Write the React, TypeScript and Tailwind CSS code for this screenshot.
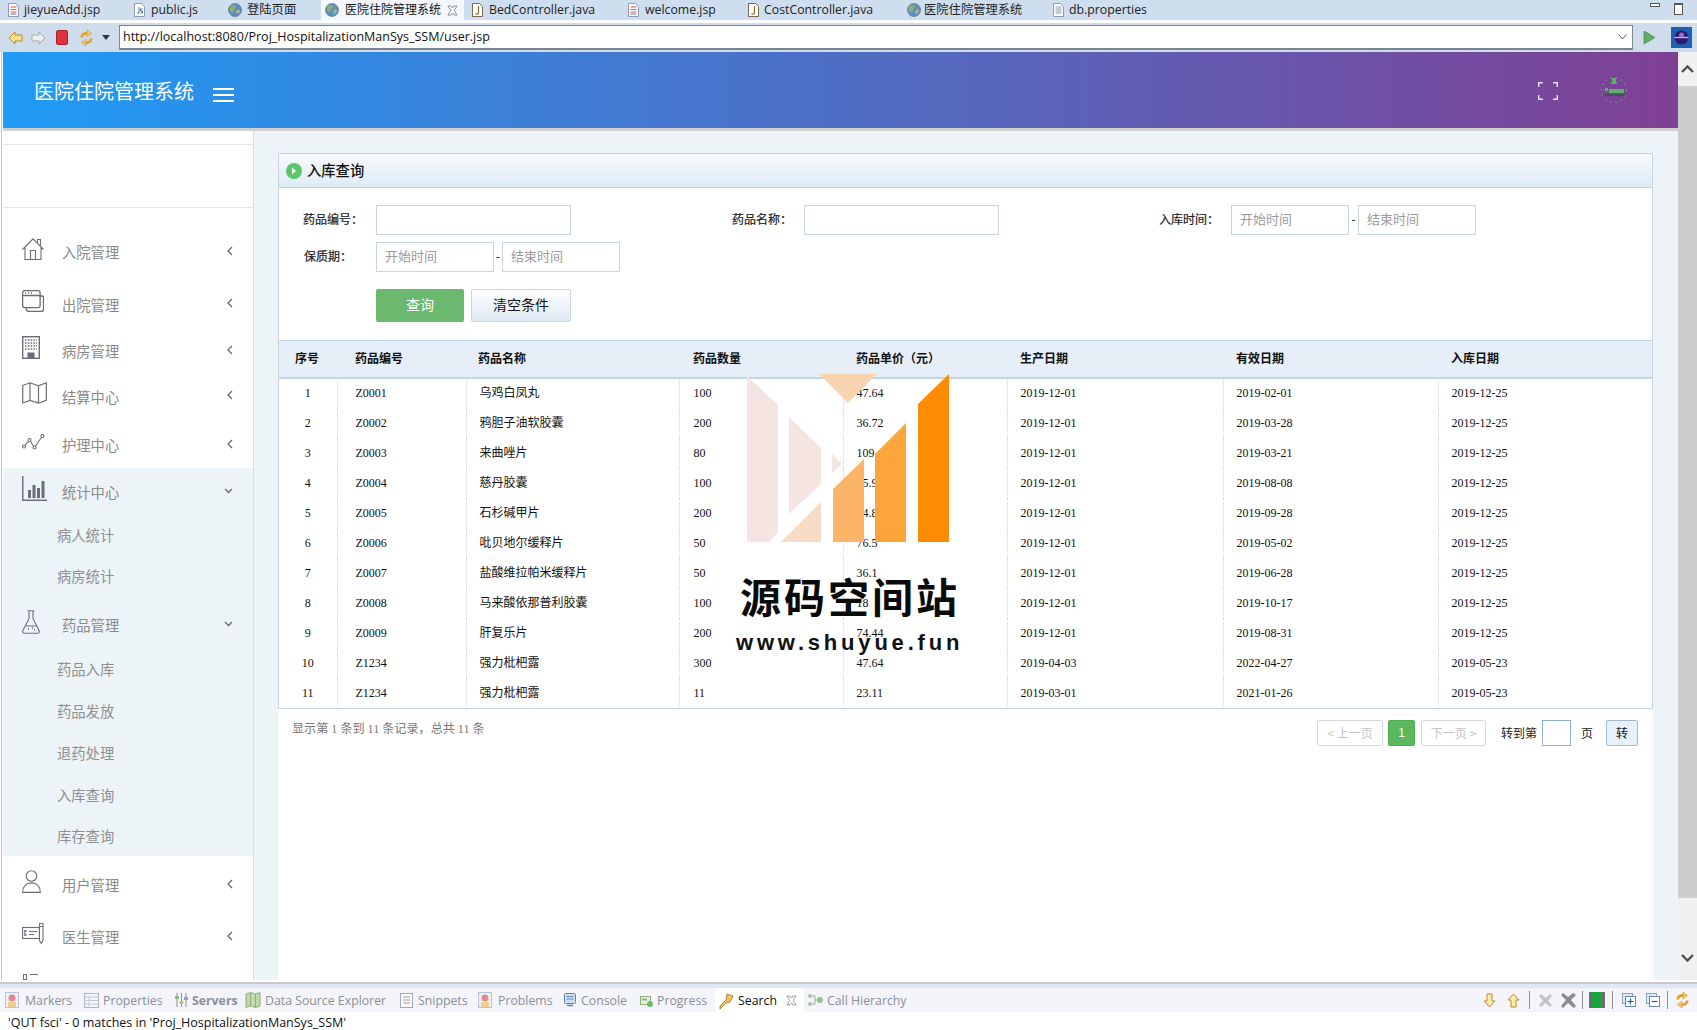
import React from "react";

const cjk = "font-['Noto_Sans_CJK_SC',sans-serif]";
const ui = "font-['Open_Sans','Noto_Sans_CJK_SC',sans-serif]";
const mixed = "font-['Liberation_Serif','Noto_Sans_CJK_SC',serif]";

function Globe() {
  return (
    <svg width="14" height="14" viewBox="0 0 14 14" className="shrink-0">
      <circle cx="7" cy="7" r="6.5" fill="#5d8fc0" />
      <path d="M3 3c2-2 4-1 5 0 0 2-2 2-2 4s-2 3-3 2-2-4 0-6z" fill="#8fae6e" />
      <path d="M9 7c2-1 3 0 3 1s-2 3-3 3-1-3 0-4z" fill="#a9b98a" />
      <circle cx="7" cy="7" r="6.5" fill="none" stroke="#46688c" strokeWidth="0.6" />
    </svg>
  );
}
function FileIco({ kind }: { kind: "jsp" | "js" | "java" | "txt" }) {
  const c = kind === "java" ? "#8a6a2c" : "#8b97a8";
  return (
    <svg width="11" height="14" viewBox="0 0 11 14" className="shrink-0">
      <path d="M.5.5h7l3 3v10h-10z" fill="#fff" stroke={kind === "java" ? "#6f6a50" : "#8f9bb0"} />
      {kind === "jsp" && (
        <>
          <path d="M2.5 4h6" stroke="#d5533f" />
          <path d="M2.5 6.500h6" stroke="#5ba05b" />
          <path d="M2.500 9h6" stroke="#d5533f" />
          <path d="M2.500 11h6" stroke="#5b7fb8" />
        </>
      )}
      {kind === "js" && <path d="M5 4v6M3 10h2M6.500 6h2M6.500 6v2h2v2h-2" stroke="#4f6f9c" fill="none" />}
      {kind === "java" && <path d="M6.500 3v7c0 1-2 1.500-3 .5" stroke={c} fill="none" strokeWidth="1.200" />}
      {kind === "txt" && <path d="M2.500 4h6M2.500 6h6M2.500 8h6M2.500 10h6" stroke={c} />}
    </svg>
  );
}
function XIco({ c = "#777" }: { c?: string }) {
  return (
    <svg width="11" height="11" viewBox="0 0 11 11" className="shrink-0">
      <path d="M1 1l3 0 1.500 2 1.500-2 3 0-2.800 4.500 2.800 4.500-3 0-1.500-2-1.500 2-3 0 2.800-4.500z" fill="#fff" stroke={c} strokeWidth="0.8" />
    </svg>
  );
}

const tabs = [
  { w: "w-[126px]", label: "jieyueAdd.jsp", ico: <FileIco kind="jsp" />, gap: "gap-[5px]" },
  { w: "w-[94px]", label: "public.js", ico: <FileIco kind="js" />, gap: "gap-[6px]" },
  { w: "w-[101px]", label: "登陆页面", ico: <Globe />, gap: "gap-[5px]" },
];
const tabs2 = [
  { w: "w-[156px]", label: "BedController.java", ico: <FileIco kind="java" />, gap: "gap-[6px]" },
  { w: "w-[120px]", label: "welcome.jsp", ico: <FileIco kind="jsp" />, gap: "gap-[6px]" },
  { w: "w-[159px]", label: "CostController.java", ico: <FileIco kind="java" />, gap: "gap-[5px]" },
  { w: "w-[146px]", label: "医院住院管理系统", ico: <Globe />, gap: "gap-[3px]" },
  { w: "w-[110px]", label: "db.properties", ico: <FileIco kind="txt" />, gap: "gap-[5px]" },
];

function TabBar() {
  const cls = `flex items-center h-[20px] pl-[8px] text-[12.300px] text-[#222] ${ui}`;
  return (
    <div className="flex h-[20px] bg-[#cfdeee] shrink-0">
      {tabs.map((t) => (
        <div key={t.label} className={`${cls} ${t.w} ${t.gap}`}>
          {t.ico}
          <span className="whitespace-nowrap">{t.label}</span>
        </div>
      ))}
      <div className={`flex items-center h-[20px] w-[143px] pl-[4px] gap-[6px] bg-[#f4f7fb] text-[12px] text-[#111] ${ui}`}>
        <Globe />
        <span className="whitespace-nowrap">医院住院管理系统</span>
        <XIco />
      </div>
      {tabs2.map((t) => (
        <div key={t.label} className={`${cls} ${t.w} ${t.gap}`}>
          {t.ico}
          <span className="whitespace-nowrap">{t.label}</span>
        </div>
      ))}
      <div className="ml-auto flex pt-[3px] pr-[14px] gap-[14px]">
        <div className="w-[10px] h-[4px] border border-[#555] bg-white" />
        <div className="w-[9px] h-[12px] border border-[#555] border-t-2 bg-white" />
      </div>
    </div>
  );
}

function Arrow({ fill, stroke, dir }: { fill: string; stroke: string; dir: "l" | "r" }) {
  return (
    <svg width="15" height="14" viewBox="0 0 15 14" className="shrink-0">
      <path d={dir === "l" ? "M1 7l6-6v3h7v6h-7v3z" : "M14 7l-6-6v3h-7v6h7v3z"} fill={fill} stroke={stroke} />
    </svg>
  );
}
function Sync() {
  return (
    <svg width="15" height="18" viewBox="0 0 15 18" fill="none" className="shrink-0">
      <path d="M2.500 8.500C3 5.500 5.500 4 8.500 4.500" stroke="#e0a02c" strokeWidth="2.600" />
      <path d="M8 1l4.500 3.500L8 8z" fill="#f4c859" stroke="#c68a1a" strokeWidth="0.500" />
      <path d="M12.500 9.500C12 12.500 9.500 14 6.500 13.500" stroke="#e0a02c" strokeWidth="2.600" />
      <path d="M7 10l-4.500 3.500L7 17z" fill="#f4c859" stroke="#c68a1a" strokeWidth="0.500" />
    </svg>
  );
}

function Toolbar() {
  return (
    <div className="flex items-center h-[29px] bg-[#cfdcec] shrink-0 pl-[8px]">
      <Arrow fill="#fbe08e" stroke="#b98a1d" dir="l" />
      <span className="ml-[8px]"><Arrow fill="#eee" stroke="#aaa" dir="r" /></span>
      <div className="ml-[10px] w-[12px] h-[15px] rounded-[2px] bg-[#e0323c] border border-[#a9212a]" />
      <span className="ml-[11px]"><Sync /></span>
      <svg width="8" height="5" viewBox="0 0 8 5" className="ml-[8px] shrink-0"><path d="M0 0h8l-4 5z" fill="#333" /></svg>
      <div className={`ml-[9px] flex items-center w-[1514px] h-[25px] bg-white border border-[#7a8590] border-b-2 pl-[3px] pr-[5px] text-[12.500px] text-[#111] ${ui}`}>
        <span className="whitespace-nowrap">http://localhost:8080/Proj_HospitalizationManSys_SSM/user.jsp</span>
        <svg width="9" height="6" viewBox="0 0 9 6" className="ml-auto"><path d="M.5.5l4 4.500 4-4.500" fill="none" stroke="#555" /></svg>
      </div>
      <svg width="13" height="13" viewBox="0 0 13 13" className="ml-[10px] shrink-0"><path d="M1 0l11 6.500-11 6.500z" fill="#5fae5f" stroke="#2f7d3f" strokeWidth="0.600" /></svg>
      <svg width="21" height="21" viewBox="0 0 21 21" className="ml-[15px] shrink-0">
        <rect width="21" height="21" fill="#1f5fb0" />
        <circle cx="10.500" cy="10.500" r="7" fill="#2c1c6e" />
        <path d="M3.500 10.500h14" stroke="#d6a8e8" strokeWidth="1.400" />
        <circle cx="10.500" cy="8" r="2.500" fill="#9a6ac8" />
      </svg>
    </div>
  );
}

const iconStroke = "#6d6d7a";
const Svg = ({ w, h, children }: { w: number; h: number; children: React.ReactNode }) => (
  <svg width={w} height={h} viewBox={`0 0 ${w} ${h}`} fill="none" stroke={iconStroke} strokeWidth="1.100" className="block">
    {children}
  </svg>
);
const HomeI = () => (
  <Svg w={22} h={22}>
    <path d="M.5 11.500L11 .8l10.500 10.700M3 9.500v12h16v-12M8.500 21.500v-9h5v9M15.500 4.500V1.500h3v6" />
  </Svg>
);
const WinI = () => (
  <Svg w={22} h={22}>
    <rect x=".6" y=".6" width="17.500" height="17" rx="2" strokeWidth="1.300" />
    <path d="M.6 5.500h17.500M18 6h2a1.500 1.500 0 0 1 1.500 1.500v12a2 2 0 0 1-2 2H7a2.500 2.500 0 0 1-2.500-3.500" strokeWidth="1.300" />
    <path d="M3 3h1M6 3h1M9 3h1" strokeWidth="1.500" />
  </Svg>
);
const BuildI = () => (
  <Svg w={18} h={23}>
    <rect x=".7" y=".7" width="16.600" height="21.600" strokeWidth="1.400" />
    <path d="M3 4h12M3 7h12M3 10h12M3 13h12" strokeDasharray="1.600 1.200" strokeWidth="1.500" />
    <path d="M6 22v-5h6v5z" fill={iconStroke} />
  </Svg>
);
const MapI = () => (
  <Svg w={25} h={22}>
    <path d="M.7 3.500L8 .8l8.500 3L24.300.8v17.500L16.500 21 8 18.500.7 21zM8 .8v17.700M16.500 3.800V21" strokeWidth="1.200" />
  </Svg>
);
const LineI = () => (
  <Svg w={23} h={16}>
    <circle cx="2" cy="12.500" r="1.500" />
    <circle cx="7.500" cy="6" r="1.500" />
    <circle cx="12.500" cy="13.500" r="1.500" />
    <circle cx="20.500" cy="2" r="1.500" />
    <path d="M3 11.300l3.500-4M8.500 7.300l3 5M13.500 12.300l6-9" />
  </Svg>
);
const BarI = () => (
  <Svg w={25} h={25}>
    <path d="M.8 0v24.200H25" strokeWidth="1.400" />
    <path d="M6 14h3v8H6zM10.500 9h3v13h-3zM15 12h3v10h-3zM19.500 5h3v17h-3z" fill={iconStroke} stroke="none" />
  </Svg>
);
const FlaskI = () => (
  <Svg w={18} h={24}>
    <path d="M5.500.7h7M7 .7v8L.9 20.500c-.6 1.500.2 2.800 1.800 2.800h12.600c1.600 0 2.400-1.300 1.800-2.800L11 8.700v-8M4 16h10" />
    <path d="M6 19h1M10 18h1M12 20h1" strokeWidth="1.400" />
  </Svg>
);
const UserI = () => (
  <Svg w={19} h={23}>
    <circle cx="9.500" cy="6" r="5.300" />
    <path d="M.6 22.400c0-6 3.800-9.500 8.900-9.500s8.900 3.500 8.900 9.500z" />
  </Svg>
);
const ChequeI = () => (
  <Svg w={23} h={23}>
    <rect x=".6" y="5.500" width="16.800" height="11" />
    <path d="M3 8v6M5 9h-3M5 13H2M7 9.500h8M7 12.500h5" />
    <path d="M17.500 1.500h3.500v17l-1.700 3-1.800-3zM17.500 4.500H21" />
  </Svg>
);

const Chev = ({ open }: { open?: boolean }) =>
  open ? (
    <svg width="9" height="6" viewBox="0 0 9 6" className="ml-auto mr-[20px] -mt-[2px] shrink-0"><path d="M1 1l3.500 3.500L8 1" fill="none" stroke="#666" strokeWidth="1.300" /></svg>
  ) : (
    <svg width="6" height="10" viewBox="0 0 6 10" className="ml-auto mr-[20px] -mt-[2px] shrink-0"><path d="M5 1L1 5l4 4" fill="none" stroke="#666" strokeWidth="1.300" /></svg>
  );

function NavRow({ h, icon, label, open }: { h: string; icon: React.ReactNode; label: string; open?: boolean }) {
  return (
    <div className={`flex items-center pl-[19px] ${h}`}>
      <div className="w-[40px] -mt-[6px] shrink-0">{icon}</div>
      <span className={`text-[14.300px] text-[#8a8a8a] whitespace-nowrap ${cjk}`}>{label}</span>
      <Chev open={open} />
    </div>
  );
}
function SubRow({ h, label }: { h: string; label: string }) {
  return (
    <div className={`flex items-center pl-[54px] pt-[2px] ${h} text-[14.300px] text-[#8f8f8f] ${cjk}`}>{label}</div>
  );
}

function Sidebar() {
  return (
    <aside className="w-[251px] shrink-0 bg-white border-r border-[#d5dfe5] flex flex-col overflow-hidden">
      <div className="h-[14px] shrink-0 border-b border-[#e5e5e5]" />
      <div className="h-[63px] shrink-0 border-b border-[#e5e5e5]" />
      <div className="h-[18px] shrink-0" />
      <NavRow h="h-[52px]" icon={<HomeI />} label="入院管理" />
      <NavRow h="h-[54px]" icon={<WinI />} label="出院管理" />
      <NavRow h="h-[40px]" icon={<BuildI />} label="病房管理" />
      <NavRow h="h-[50px] pt-[2px]" icon={<MapI />} label="结算中心" />
      <NavRow h="h-[48px] pt-[2px]" icon={<LineI />} label="护理中心" />
      <div className="bg-[#ecf4f8] shrink-0">
        <NavRow h="h-[46px] pt-[2px]" icon={<BarI />} label="统计中心" open />
        <SubRow h="h-[40px]" label="病人统计" />
        <SubRow h="h-[42px]" label="病房统计" />
        <NavRow h="h-[51px] pt-[7px]" icon={<FlaskI />} label="药品管理" open />
        <SubRow h="h-[42px]" label="药品入库" />
        <SubRow h="h-[42px]" label="药品发放" />
        <SubRow h="h-[42px]" label="退药处理" />
        <SubRow h="h-[41px]" label="入库查询" />
        <SubRow h="h-[42px]" label="库存查询" />
      </div>
      <NavRow h="h-[56px] pt-[2px]" icon={<UserI />} label="用户管理" />
      <NavRow h="h-[48px] pt-[3px]" icon={<ChequeI />} label="医生管理" />
      <div className="pt-[15px] pl-[20px] flex gap-[3px]">
        <div className="w-[4px] h-[6px] border border-[#6d6d7a]" />
        <div className="w-[8px] h-[1px] bg-[#6d6d7a]" />
      </div>
    </aside>
  );
}

const inputCls = `h-[30px] border border-[#c5d5e2] bg-white pl-[8px] pr-[8px] pb-[3px] text-[13px] outline-none placeholder:text-[#9a9a9a] shrink-0 ${cjk}`;
const labelCls = `text-[12px] text-[#222] whitespace-nowrap shrink-0 pb-[2px] [-webkit-text-stroke:0.2px_#222] ${cjk}`;

function Form() {
  return (
    <div className="h-[152px] shrink-0 pt-[17px]">
      <div className="flex items-center pl-[24px]">
        <span className={`w-[73px] ${labelCls}`}>药品编号：</span>
        <input className={`w-[195px] ${inputCls}`} />
        <span className={`ml-[161px] w-[72px] ${labelCls}`}>药品名称：</span>
        <input className={`w-[195px] ${inputCls}`} />
        <span className={`ml-[160px] w-[72px] ${labelCls}`}>入库时间：</span>
        <input className={`w-[118px] ${inputCls}`} placeholder="开始时间" />
        <span className="w-[9px] text-center text-[12px] text-[#333]">-</span>
        <input className={`w-[118px] ${inputCls}`} placeholder="结束时间" />
      </div>
      <div className="flex items-center pl-[25px] mt-[7px]">
        <span className={`w-[72px] ${labelCls}`}>保质期：</span>
        <input className={`w-[118px] ${inputCls}`} placeholder="开始时间" />
        <span className="w-[8px] text-center text-[12px] text-[#333]">-</span>
        <input className={`w-[118px] ${inputCls}`} placeholder="结束时间" />
      </div>
      <div className="flex pl-[97px] mt-[17px] gap-[7px]">
        <button className={`w-[88px] h-[33px] pb-[3px] rounded-[2px] bg-[#6ab96f] text-white text-[14px] ${cjk}`}>查询</button>
        <button className={`w-[100px] h-[33px] pb-[3px] rounded-[2px] border border-[#c5d5e2] bg-linear-to-b/srgb from-white to-[#dfe9f3] text-[#111] text-[14px] ${cjk}`}>清空条件</button>
      </div>
    </div>
  );
}

const rows = [
  ["1", "Z0001", "乌鸡白凤丸", "100", "47.64", "2019-12-01", "2019-02-01", "2019-12-25"],
  ["2", "Z0002", "鸦胆子油软胶囊", "200", "36.72", "2019-12-01", "2019-03-28", "2019-12-25"],
  ["3", "Z0003", "来曲唑片", "80", "109", "2019-12-01", "2019-03-21", "2019-12-25"],
  ["4", "Z0004", "慈丹胶囊", "100", "75.9", "2019-12-01", "2019-08-08", "2019-12-25"],
  ["5", "Z0005", "石杉碱甲片", "200", "64.8", "2019-12-01", "2019-09-28", "2019-12-25"],
  ["6", "Z0006", "吡贝地尔缓释片", "50", "76.5", "2019-12-01", "2019-05-02", "2019-12-25"],
  ["7", "Z0007", "盐酸维拉帕米缓释片", "50", "36.1", "2019-12-01", "2019-06-28", "2019-12-25"],
  ["8", "Z0008", "马来酸依那普利胶囊", "100", "18", "2019-12-01", "2019-10-17", "2019-12-25"],
  ["9", "Z0009", "肝复乐片", "200", "74.44", "2019-12-01", "2019-08-31", "2019-12-25"],
  ["10", "Z1234", "强力枇杷露", "300", "47.64", "2019-04-03", "2022-04-27", "2019-05-23"],
  ["11", "Z1234", "强力枇杷露", "11", "23.11", "2019-03-01", "2021-01-26", "2019-05-23"],
];
const heads = ["序号", "药品编号", "药品名称", "药品数量", "药品单价（元）", "生产日期", "有效日期", "入库日期"];
const colW = ["w-[58px]", "w-[129px]", "w-[213px]", "w-[164px]", "w-[164px]", "w-[216px]", "w-[215px]", "w-[214px]"];
const headPad = ["pl-[16px]", "pl-[18px]", "pl-[12px]", "pl-[14px]", "pl-[13px]", "pl-[13px]", "pl-[13px]", "pl-[13px]"];
const cellPad = ["text-center", "pl-[18px]", "pl-[13px]", "pl-[14px]", "pl-[13px]", "pl-[13px]", "pl-[13px]", "pl-[13px]"];

function DataTable() {
  return (
    <table className="w-[1373px] table-fixed border-collapse">
      <colgroup>
        {colW.map((c, i) => <col key={i} className={c} />)}
      </colgroup>
      <thead>
        <tr className="h-[37px] bg-[#e6eff7] border-t border-b-2 border-[#c5d5e2]">
          {heads.map((h, i) => (
            <th key={h} className={`text-left font-bold text-[12px] text-[#111] pb-[2px] ${headPad[i]} ${cjk}`}>{h}</th>
          ))}
        </tr>
      </thead>
      <tbody>
        {rows.map((r) => (
          <tr key={r[0]} className="h-[30px]">
            {r.map((c, i) => (
              <td key={i} className={`p-0 text-[12px] text-[#111] border-dotted border-[#d8d8d8] ${i < 7 ? "border-r" : ""} ${cellPad[i]} ${mixed}`}>{c}</td>
            ))}
          </tr>
        ))}
      </tbody>
    </table>
  );
}

function Pager() {
  const disabled = `h-[26px] rounded-[2px] border border-[#d8d8d8] text-[12px] text-[#c4c4c4] flex items-center justify-center ${cjk}`;
  return (
    <div className={`flex justify-between pl-[14px] pr-[15px] pt-[11px] ${cjk}`}>
      <div className={`text-[12.100px] text-[#777] ${mixed}`}>显示第 1 条到 11 条记录，总共 11 条</div>
      <div className="flex items-center h-[26px] text-[12px] text-[#222]">
        <div className={`w-[66px] ${disabled}`}>&lt; 上一页</div>
        <div className="ml-[5px] w-[27px] h-[26px] rounded-[2px] bg-[#5cb85c] border border-[#4cae4c] text-white flex items-center justify-center font-['Liberation_Sans',sans-serif]">1</div>
        <div className={`ml-[6px] w-[65px] ${disabled}`}>下一页 &gt;</div>
        <span className="ml-[15px] w-[41px]">转到第</span>
        <input className="w-[29px] h-[26px] border border-[#8fb2d3] bg-white outline-none" />
        <span className="ml-[10px] w-[25px]">页</span>
        <div className="w-[32px] h-[26px] rounded-[2px] bg-[#e8f1fb] border border-[#9ebbd8] flex items-center justify-center text-[#111]">转</div>
      </div>
    </div>
  );
}

function Panel() {
  return (
    <div className="w-[1375px] h-[827px] bg-white">
      <div className="border border-[#c5d5e2]">
        <div className="h-[34px] flex items-center pl-[7px] gap-[5px] bg-linear-to-b/srgb from-[#f7fafd] to-[#deebf5] border-b border-[#c5d5e2]">
          <svg width="16" height="16" viewBox="0 0 16 16" className="shrink-0">
            <circle cx="8" cy="8" r="8" fill="#5cc76a" />
            <path d="M6 4.500l4 3.500-4 3.500z" fill="#fff" />
          </svg>
          <span className={`text-[14.300px] text-[#111] font-medium pb-[2px] ${cjk}`}>入库查询</span>
        </div>
        <Form />
        <DataTable />
      </div>
      <Pager />
    </div>
  );
}

function Header() {
  return (
    <header className="h-[76px] shrink-0 flex bg-linear-to-r/srgb from-[#1e9bf5] to-[#7f4094]">
      <div className={`ml-[31px] mt-[26px] text-[20px] leading-[26px] text-white whitespace-nowrap ${cjk}`}>医院住院管理系统</div>
      <div className="ml-[19px] mt-[36px] w-[21px] h-[14px] flex flex-col justify-between">
        <div className="h-[2px] bg-white" />
        <div className="h-[2px] bg-white" />
        <div className="h-[2px] bg-white" />
      </div>
      <svg width="20" height="18" viewBox="0 0 20 18" fill="none" stroke="#e8e4f2" strokeWidth="1.400" className="ml-auto mt-[30px]">
        <path d="M.7 5V.7h4M15 .7h4.300V5M19.300 13v4.300H15M5 17.300H.7V13" />
      </svg>
      <svg width="28" height="26" viewBox="0 0 28 26" className="ml-[42px] mr-[50px] mt-[25px]">
        <circle cx="14" cy="13" r="12.500" fill="none" stroke="#6fc07c" strokeWidth="1" strokeDasharray="1.500 4" />
        <rect x="12" y="1" width="4" height="6" fill="#58b26a" />
        <path d="M10 6h8" stroke="#58b26a" />
        <rect x="5" y="11" width="3" height="3" fill="#58b26a" />
        <rect x="9" y="12" width="15" height="4" fill="#58b26a" />
        <path d="M3 18h22" stroke="#35503f" strokeWidth="1.200" />
      </svg>
    </header>
  );
}

function Scrollbar() {
  return (
    <div className="w-[19px] shrink-0 bg-[#f0f0f0] flex flex-col">
      <div className="h-[34px] flex items-center justify-center">
        <svg width="13" height="8" viewBox="0 0 13 8"><path d="M1 7l5.500-5.500L12 7" fill="none" stroke="#505050" strokeWidth="2.400" /></svg>
      </div>
      <div className="h-[812px] bg-[#cdcdcd]" />
      <div className="h-[82px] pt-[56px] pl-[3px]">
        <svg width="13" height="8" viewBox="0 0 13 8"><path d="M1 1l5.500 5.500L12 1" fill="none" stroke="#505050" strokeWidth="2.400" /></svg>
      </div>
    </div>
  );
}

function Watermark() {
  return (
    <div className="absolute left-[730px] top-[370px] w-[240px] pointer-events-none">
      <svg width="240" height="176" viewBox="0 0 240 176" className="block">
        <path d="M17 6l31 29v127l-9 10H17z" fill="#f5e4e2" />
        <path d="M59 47l32 31v36l-32 30z" fill="#f5e4e2" />
        <path d="M102 84l10 10-10 9z" fill="#f5e4e2" />
        <path d="M89 4h58l-29 29z" fill="#f7d3b0" />
        <path d="M51 172l40-40v40z" fill="#f8dbc4" />
        <path d="M103 119l31-30v83h-31z" fill="#fcb469" />
        <path d="M145 84l31-31v119h-31z" fill="#fca53c" />
        <path d="M188 34l31-30v168h-31z" fill="#fc8c04" />
      </svg>
      <div className={`mt-[25px] ml-[10px] text-[41px] leading-[48px] font-bold text-[#0a0a0a] tracking-[3px] whitespace-nowrap ${cjk}`}>源码空间站</div>
      <div className="mt-[11px] ml-[6px] text-[22px] leading-[26px] font-bold text-[#111] tracking-[3.800px] whitespace-nowrap font-['Liberation_Sans',sans-serif]">www.shuyue.fun</div>
    </div>
  );
}

const Marker = () => (
  <svg width="14" height="16" viewBox="0 0 14 16" className="shrink-0 opacity-70">
    <rect x=".5" y=".5" width="13" height="15" fill="#e8eef6" stroke="#9fb0c8" />
    <circle cx="7" cy="6" r="3.500" fill="#e05a5a" />
    <rect x="3" y="10" width="8" height="5" fill="#f0c060" />
  </svg>
);
const Sheet = () => (
  <svg width="15" height="15" viewBox="0 0 15 15" className="shrink-0 opacity-70">
    <rect x=".5" y=".5" width="14" height="14" fill="#f2f5fa" stroke="#8a98ad" />
    <path d="M.5 4h14M.5 7.500h14M.5 11h14M5 4v11" stroke="#aab6c8" />
  </svg>
);
const Sliders = () => (
  <svg width="13" height="14" viewBox="0 0 13 14" className="shrink-0 opacity-80">
    <path d="M2 0v14M6.500 0v14M11 0v14" stroke="#777" />
    <rect x="0" y="3" width="4" height="3" fill="#6fa86f" /><rect x="4.500" y="8" width="4" height="3" fill="#d9a441" /><rect x="9" y="4" width="4" height="3" fill="#6f8fb8" />
  </svg>
);
const DataI = () => (
  <svg width="16" height="16" viewBox="0 0 16 16" className="shrink-0 opacity-80">
    <path d="M1 2l4.500-1.500L10.500 2 15 .5V14l-4.500 1.500L5.500 14 1 15.500z" fill="#b5d29a" stroke="#7c9a5c" />
    <path d="M5.500 1v13M10.500 2v13" stroke="#7c9a5c" />
  </svg>
);
const Snip = () => (
  <svg width="13" height="15" viewBox="0 0 13 15" className="shrink-0 opacity-80">
    <rect x=".5" y=".5" width="12" height="14" fill="#fff" stroke="#8a98ad" />
    <path d="M3 4h7M3 7h7" stroke="#6f9a6f" /><path d="M3 10h7" stroke="#d06060" />
  </svg>
);
const Cons = () => (
  <svg width="12" height="14" viewBox="0 0 12 14" className="shrink-0">
    <rect x=".5" y=".5" width="11" height="10" rx="1" fill="#cfe0f2" stroke="#5f84ad" />
    <path d="M2.500 3.500h7M2.500 6h7" stroke="#5f84ad" /><path d="M3 12.500h6" stroke="#5f84ad" strokeWidth="1.500" />
  </svg>
);
const Prog = () => (
  <svg width="13" height="13" viewBox="0 0 13 13" className="shrink-0 opacity-80">
    <rect x=".5" y="2.500" width="10" height="8" fill="#e6f0e0" stroke="#7c9a5c" />
    <rect x="2" y="4.500" width="5" height="2" fill="#6fa86f" />
    <circle cx="10" cy="10" r="3" fill="#58a858" />
  </svg>
);
const Torch = () => (
  <svg width="17" height="17" viewBox="0 0 17 17" className="shrink-0">
    <path d="M9 2l6 2-3 6-4 1-6 6 0-3 6-6z" fill="#f0c45c" stroke="#9a6f1f" strokeWidth="0.800" />
  </svg>
);
const Hier = () => (
  <svg width="17" height="14" viewBox="0 0 17 14" className="shrink-0 opacity-70">
    <circle cx="3" cy="3" r="2" fill="#8db48d" /><circle cx="3" cy="11" r="2" fill="#8db48d" /><circle cx="13" cy="7" r="3" fill="#6fae6f" />
    <path d="M5 3h3v8H5M8 7h3" stroke="#888" fill="none" />
  </svg>
);

function BottomItem({ w, ico, g, label, bold }: { w: string; ico: React.ReactNode; g: string; label: string; bold?: boolean }) {
  return (
    <div className={`flex items-center h-[24px] ${w} ${g}`}>
      {ico}
      <span className={`text-[12.300px] pt-[2px] text-[#8a8f98] whitespace-nowrap ${bold ? "font-bold" : ""}`}>{label}</span>
    </div>
  );
}

function Sep() {
  return <div className="w-[1px] h-[18px] bg-[#8f8f8f] shrink-0" />;
}

function BottomBar() {
  return (
    <div className={`flex h-[24px] bg-[#f3f5fb] pl-[5px] items-center shrink-0 ${ui}`}>
      <BottomItem w="w-[79px]" g="gap-[6px]" ico={<Marker />} label="Markers" />
      <BottomItem w="w-[91px]" g="gap-[4px]" ico={<Sheet />} label="Properties" />
      <BottomItem w="w-[70px]" g="gap-[4px]" ico={<Sliders />} label="Servers" bold />
      <BottomItem w="w-[155px]" g="gap-[4px]" ico={<DataI />} label="Data Source Explorer" />
      <BottomItem w="w-[78px]" g="gap-[5px]" ico={<Snip />} label="Snippets" />
      <BottomItem w="w-[86px]" g="gap-[6px]" ico={<Marker />} label="Problems" />
      <BottomItem w="w-[76px]" g="gap-[5px]" ico={<Cons />} label="Console" />
      <BottomItem w="w-[75px]" g="gap-[4px]" ico={<Prog />} label="Progress" />
      <div className="flex items-center h-[24px] w-[89px] pl-[3px] gap-[3px] bg-white rounded-t-[4px]">
        <Torch />
        <span className="text-[12.300px] pt-[2px] text-[#111] whitespace-nowrap">Search</span>
        <span className="ml-[6px]"><XIco c="#888" /></span>
      </div>
      <div className="ml-[3px]"><BottomItem w="w-[120px]" g="gap-[3px]" ico={<Hier />} label="Call Hierarchy" /></div>
      <div className="ml-auto flex items-center pr-[7px]">
        <Arrow2 d />
        <span className="ml-[11px]"><Arrow2 /></span>
        <span className="mx-[9px]"><Sep /></span>
        <svg width="13" height="13" viewBox="0 0 13 13"><path d="M2 0l4.500 4L11 0l2 2-4 4.500 4 4.500-2 2-4.500-4L2 13l-2-2 4-4.500L0 2z" fill="#c4c4c4" /></svg>
        <svg width="15" height="15" viewBox="0 0 15 15" className="ml-[9px]"><path d="M2 0l5 4 5-4 3 2-5 5 5 6-2 2-6-5-5 5-2-2 5-6L0 2z" fill="#8c8c8c" /></svg>
        <span className="mx-[6px]"><Sep /></span>
        <svg width="16" height="16" viewBox="0 0 16 16"><rect width="16" height="16" fill="#6e6e6e" /><rect x="3" width="10" height="16" fill="#12a83a" /><rect x="6" y="4" width="2" height="2" fill="#6e6e6e" /><rect x="6" y="10" width="2" height="2" fill="#6e6e6e" /></svg>
        <span className="mx-[7px]"><Sep /></span>
        <svg width="14" height="14" viewBox="0 0 14 14" className="ml-[2px]"><rect x=".5" y=".5" width="10" height="10" fill="#dce8f5" stroke="#8aa5c4" /><rect x="3.500" y="3.500" width="10" height="10" fill="#fff" stroke="#6a88ab" /><path d="M5.500 8.500h6M8.500 5.500v6" stroke="#1f5fa0" strokeWidth="1.200" /></svg>
        <svg width="14" height="14" viewBox="0 0 14 14" className="ml-[10px]"><rect x=".5" y=".5" width="10" height="10" fill="#dce8f5" stroke="#8aa5c4" /><rect x="3.500" y="3.500" width="10" height="10" fill="#fff" stroke="#6a88ab" /><path d="M5.500 8.500h6" stroke="#1f5fa0" strokeWidth="1.200" /></svg>
        <span className="mx-[7px]"><Sep /></span>
        <Sync />
      </div>
    </div>
  );
}

function Arrow2({ d }: { d?: boolean }) {
  return (
    <svg width="13" height="15" viewBox="0 0 13 15" className={d ? "rotate-180 block" : "block"}>
      <path d="M6.500 1L12 7H9v7H4V7H1z" fill="#fdebb0" stroke="#c48a1a" />
    </svg>
  );
}

export default function App() {
  return (
    <div className="relative w-[1697px] h-[1030px] overflow-hidden bg-white flex flex-col">
      <TabBar />
      <div className="h-[3px] bg-white shrink-0" />
      <Toolbar />
      <div className="flex h-[928px] shrink-0">
        <div className="w-[3px] shrink-0 bg-white pl-[1px]"><div className="w-[1px] h-full bg-[#c4c4c4]" /></div>
        <div className="flex flex-col w-[1675px] shrink-0">
          <Header />
          <div className="h-[3px] shrink-0 bg-[#cfcfcf]" />
          <div className="flex flex-1 min-h-0 bg-[#ecf4f8]">
            <Sidebar />
            <main className="flex-1 pt-[22px] pl-[24px] min-w-0 overflow-hidden">
              <Panel />
            </main>
          </div>
        </div>
        <Scrollbar />
      </div>
      <div className="h-[2px] bg-white shrink-0" />
      <div className="h-[2px] bg-[#c8c8c8] shrink-0" />
      <div className="h-[4px] bg-[#dfe7f5] shrink-0" />
      <BottomBar />
      <div className={`h-[18px] pl-[8px] overflow-hidden text-[12.500px] leading-[22px] text-[#111] whitespace-nowrap ${ui}`}>'QUT fsci' - 0 matches in 'Proj_HospitalizationManSys_SSM'</div>
      <Watermark />
    </div>
  );
}
